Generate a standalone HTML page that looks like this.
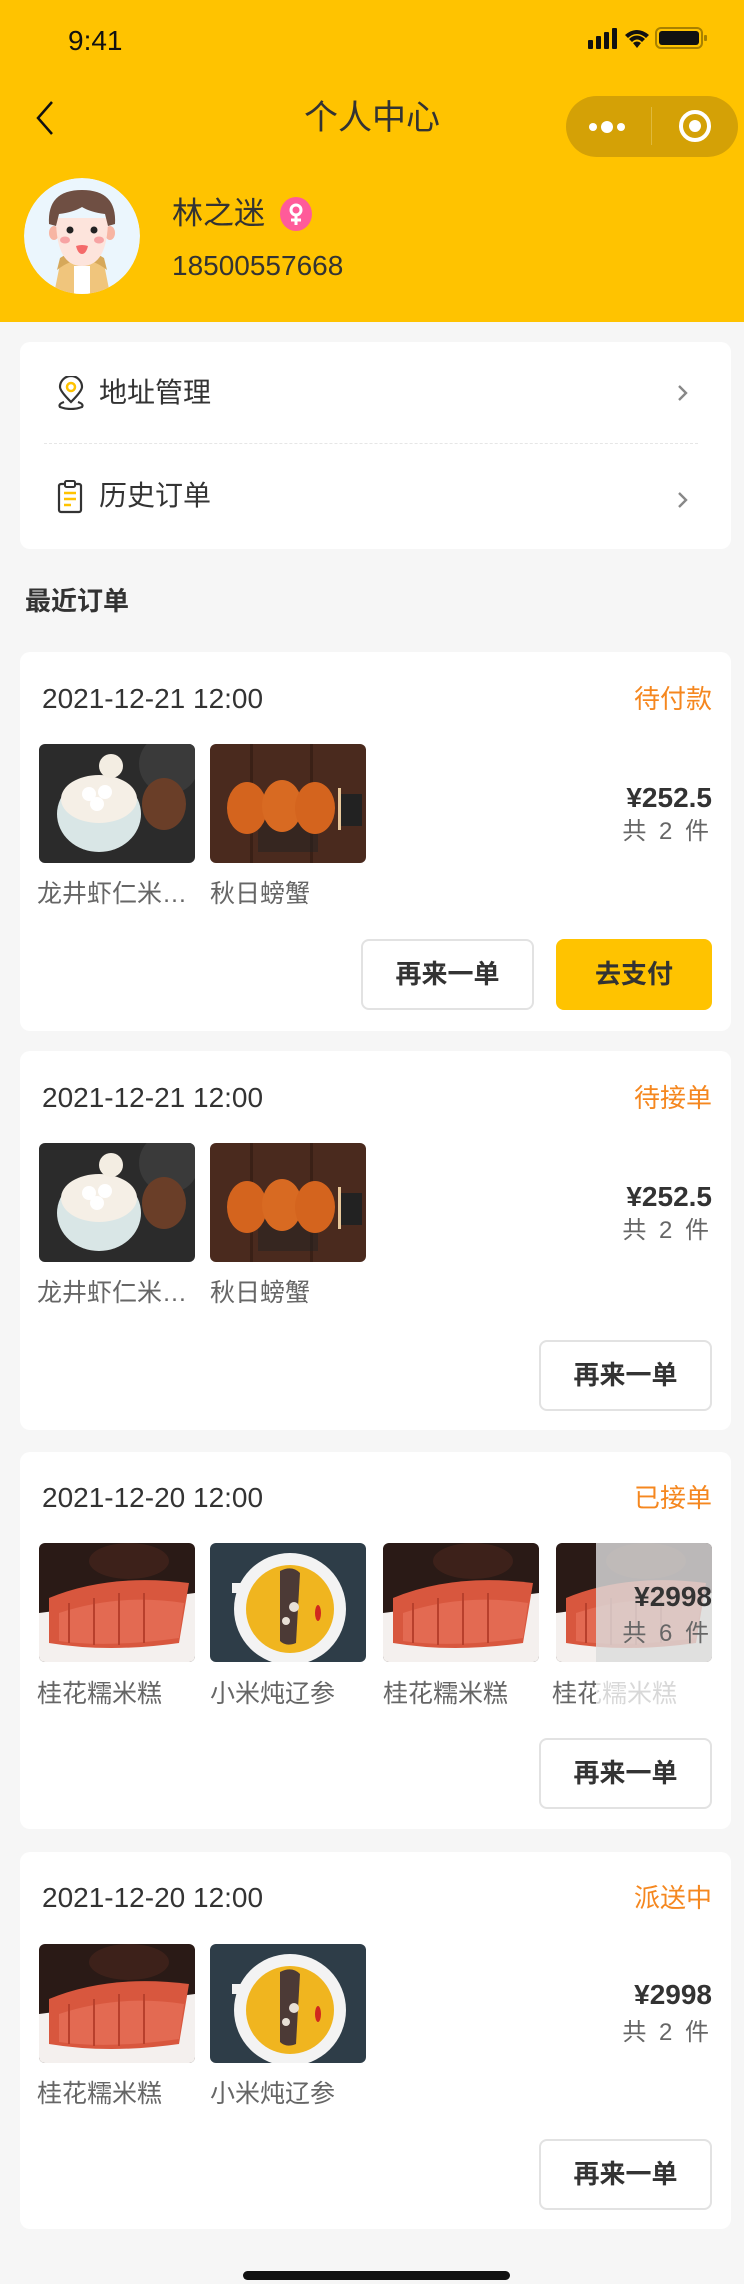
<!DOCTYPE html>
<html><head><meta charset="utf-8">
<style>
*{margin:0;padding:0;box-sizing:border-box}
body{width:744px;height:2284px;background:#f6f6f6;font-family:"Liberation Sans","Noto Sans CJK SC",sans-serif;position:relative;overflow:hidden;color:#333}
.abs{position:absolute}
.hdr{left:0;top:0;width:744px;height:322px;background:#ffc300}
.card{position:absolute;left:20px;width:711px;background:#fff;border-radius:10px}
.date{position:absolute;left:22px;font-size:28px;color:#333;line-height:30px}
.st{position:absolute;right:19px;font-size:26px;color:#f5871f;line-height:30px}
.img{position:absolute;width:156px;height:119px;border-radius:6px;overflow:hidden}
.nm{position:absolute;font-size:25px;color:#666;line-height:30px;white-space:nowrap}
.price{position:absolute;right:19px;font-size:28px;font-weight:bold;color:#333;line-height:32px}
.cnt{position:absolute;right:19px;font-size:24px;color:#666;line-height:28px;letter-spacing:3px}
.btn{position:absolute;height:71px;border:2px solid #e2e2e2;border-radius:8px;font-size:26px;font-weight:bold;color:#333;text-align:center;line-height:67px}
.btn.y{background:#ffc300;border-color:#ffc300}
</style></head><body>
<div class="abs hdr"></div>
<div class="abs" style="left:68px;top:24px;font-size:28px;color:#111;line-height:34px">9:41</div>
<svg class="abs" style="left:588px;top:26px" width="140" height="28" viewBox="0 0 140 28">
<rect x="0" y="14" width="5" height="9" rx="1" fill="#111"/><rect x="8" y="10" width="5" height="13" rx="1" fill="#111"/><rect x="16" y="6" width="5" height="17" rx="1" fill="#111"/><rect x="24" y="2" width="5" height="21" rx="1" fill="#111"/>
<path d="M37 9 Q49 -1 61 9 L58 12 Q49 4 40 12Z M41 13 Q49 6 57 13 L54 16 Q49 11 44 16Z M45 17 Q49 14 53 17 L49 22Z" fill="#111"/>
<rect x="68" y="2" width="46" height="20" rx="5" fill="none" stroke="#a88000" stroke-width="2"/><rect x="71" y="5" width="40" height="14" rx="3" fill="#111"/><rect x="116" y="9" width="3" height="6" rx="1" fill="#a88000"/>
</svg>
<svg class="abs" style="left:30px;top:100px" width="30" height="36"><path d="M22 2 L8 18 L22 34" fill="none" stroke="#111" stroke-width="2.5"/></svg>
<div class="abs" style="left:0;width:744px;top:97px;text-align:center;font-size:34px;color:#333;line-height:42px">个人中心</div>
<div class="abs" style="left:566px;top:96px;width:172px;height:61px;border-radius:31px;background:#d4a106"></div>
<div class="abs" style="left:651px;top:107px;width:1px;height:38px;background:#e0b93b"></div>
<svg class="abs" style="left:585px;top:112px" width="60" height="30"><circle cx="8" cy="15" r="4" fill="#fff"/><circle cx="22" cy="15" r="6" fill="#fff"/><circle cx="36" cy="15" r="4" fill="#fff"/></svg>
<svg class="abs" style="left:676px;top:106px" width="40" height="40"><circle cx="19" cy="20" r="14" fill="none" stroke="#fff" stroke-width="4"/><circle cx="19" cy="20" r="6" fill="#fff"/></svg>
<svg class="abs" style="left:24px;top:178px" width="116" height="116" viewBox="0 0 116 116">
<defs><clipPath id="av"><circle cx="58" cy="58" r="58"/></clipPath></defs>
<g clip-path="url(#av)">
<circle cx="58" cy="58" r="58" fill="#ebf6fd"/>
<path d="M30 116 L36 86 Q58 74 80 86 L86 116Z" fill="#f0c57c"/>
<path d="M33 92 Q58 72 83 92 L80 80 Q58 66 36 80Z" fill="#d6a85a"/>
<rect x="50" y="88" width="16" height="28" fill="#fff"/>
<ellipse cx="30" cy="55" rx="5" ry="7" fill="#f7b5a3"/><ellipse cx="86" cy="55" rx="5" ry="7" fill="#f7b5a3"/>
<path d="M32 40 Q32 88 58 88 Q84 88 84 40 Z" fill="#fde4dc"/>
<path d="M25 46 Q23 12 58 12 Q93 12 91 46 L84 48 Q82 40 81 36 Q66 34 58 29 Q50 34 35 36 Q34 40 32 48Z" fill="#6f4f43"/>
<circle cx="46" cy="52" r="3.5" fill="#222"/><circle cx="70" cy="52" r="3.5" fill="#222"/>
<ellipse cx="41" cy="62" rx="5" ry="3.5" fill="#f7a3a3"/><ellipse cx="75" cy="62" rx="5" ry="3.5" fill="#f7a3a3"/>
<path d="M52 68 Q58 66 64 68 Q62 76 58 76 Q54 76 52 68Z" fill="#f46a6a"/>
</g></svg>
<div class="abs" style="left:172px;top:195px;font-size:31px;color:#333;line-height:38px">林之迷</div>
<svg class="abs" style="left:280px;top:197px" width="33" height="34"><ellipse cx="16" cy="17" rx="16" ry="17" fill="#ff5b9a"/><circle cx="16" cy="13" r="5" fill="none" stroke="#fff" stroke-width="3"/><path d="M16 18 V28 M11 23 H21" stroke="#fff" stroke-width="3"/></svg>
<div class="abs" style="left:172px;top:249px;font-size:28px;color:#333;line-height:34px">18500557668</div>

<div class="card" style="top:342px;height:207px"></div>
<svg class="abs" style="left:56px;top:376px" width="30" height="34" viewBox="0 0 30 34"><path d="M15 26 Q4 15 4 11 A11 11 0 0 1 26 11 Q26 15 15 26Z" fill="none" stroke="#333" stroke-width="2.2"/><circle cx="15" cy="11" r="4" fill="none" stroke="#ffc300" stroke-width="2.5"/><path d="M8 26 Q2 28 4 31 Q15 35 26 31 Q28 28 22 26" fill="none" stroke="#333" stroke-width="2.2"/></svg>
<div class="abs" style="left:99px;top:376px;font-size:28px;color:#333;line-height:34px">地址管理</div>
<svg class="abs" style="left:676px;top:383px" width="14" height="20"><path d="M3 3 L10 10 L3 17" fill="none" stroke="#888" stroke-width="2.4"/></svg>
<div class="abs" style="left:44px;top:443px;width:654px;border-top:1px dashed #e6e6e6"></div>
<svg class="abs" style="left:56px;top:480px" width="30" height="34" viewBox="0 0 30 34"><rect x="3" y="4" width="22" height="28" rx="2" fill="none" stroke="#333" stroke-width="2.2"/><rect x="9" y="1" width="10" height="6" rx="1.5" fill="#fff" stroke="#333" stroke-width="2"/><path d="M8 13 H20 M8 19 H20 M8 25 H15" stroke="#ffc300" stroke-width="2.5"/></svg>
<div class="abs" style="left:99px;top:479px;font-size:28px;color:#333;line-height:34px">历史订单</div>
<svg class="abs" style="left:676px;top:490px" width="14" height="20"><path d="M3 3 L10 10 L3 17" fill="none" stroke="#888" stroke-width="2.4"/></svg>

<div class="abs" style="left:25px;top:585px;font-size:26px;font-weight:bold;color:#333;line-height:32px">最近订单</div>

<svg width="0" height="0" style="position:absolute">
<defs>
<symbol id="shrimp" viewBox="0 0 156 119"><rect width="156" height="119" fill="#2b2b2b"/><circle cx="130" cy="20" r="30" fill="#3a3a3a"/><ellipse cx="125" cy="60" rx="22" ry="26" fill="#6a3e28"/><ellipse cx="60" cy="70" rx="42" ry="38" fill="#d9e6e6"/><ellipse cx="60" cy="55" rx="38" ry="24" fill="#f5efe6"/><circle cx="50" cy="50" r="7" fill="#fff"/><circle cx="66" cy="48" r="7" fill="#fff"/><circle cx="58" cy="60" r="7" fill="#fff"/><circle cx="72" cy="22" r="12" fill="#f3ede2"/></symbol>
<symbol id="crab" viewBox="0 0 156 119"><rect width="156" height="119" fill="#4a2a1e"/><rect x="40" y="0" width="3" height="119" fill="#3a2016"/><rect x="100" y="0" width="3" height="119" fill="#3a2016"/><rect x="48" y="68" width="60" height="40" fill="#222" opacity=".5"/><ellipse cx="37" cy="64" rx="20" ry="26" fill="#d4641e"/><ellipse cx="72" cy="62" rx="20" ry="26" fill="#d86a22"/><ellipse cx="105" cy="64" rx="20" ry="26" fill="#d4641e"/><rect x="130" y="50" width="22" height="32" fill="#222"/><rect x="128" y="44" width="3" height="42" fill="#e8c89a"/></symbol>
<symbol id="cake" viewBox="0 0 156 119"><rect width="156" height="119" fill="#2a1a16"/><ellipse cx="90" cy="18" rx="40" ry="18" fill="#3d211a"/><path d="M0 70 L156 50 L156 119 L0 119Z" fill="#f4f0ee"/><path d="M10 55 Q70 30 150 40 L140 100 Q70 110 10 100Z" fill="#d8573e"/><path d="M20 70 Q80 50 145 60 L140 95 Q70 105 20 98Z" fill="#e36a52"/><path d="M30 60 V100 M55 55 V102 M80 50 V102 M105 50 V100" stroke="#b8402c" stroke-width="2"/></symbol>
<symbol id="millet" viewBox="0 0 156 119"><rect width="156" height="119" fill="#2e3d48"/><circle cx="80" cy="66" r="56" fill="#f3f3f3"/><circle cx="80" cy="66" r="44" fill="#f0b51f"/><path d="M70 28 Q82 22 90 30 L86 100 Q76 104 70 98Z" fill="#4c3a36"/><circle cx="84" cy="64" r="5" fill="#e8e0d6"/><circle cx="76" cy="78" r="4" fill="#e8e0d6"/><ellipse cx="108" cy="70" rx="3" ry="8" fill="#d0281e"/><rect x="22" y="40" width="14" height="10" fill="#f3f3f3"/></symbol>
</defs></svg>

<div class="card" style="top:652px;height:379px">
<div class="date" style="top:32px">2021-12-21 12:00</div><div class="st" style="top:32px">待付款</div>
<svg class="img" style="left:19px;top:92px"><use href="#shrimp"/></svg>
<svg class="img" style="left:190px;top:92px"><use href="#crab"/></svg>
<div class="nm" style="left:17px;top:227px">龙井虾仁米…</div><div class="nm" style="left:190px;top:227px">秋日螃蟹</div>
<div class="price" style="top:130px">¥252.5</div><div class="cnt" style="top:166px">共 2 件</div>
<div class="btn" style="left:341px;top:287px;width:173px">再来一单</div>
<div class="btn y" style="left:536px;top:287px;width:156px">去支付</div>
</div>
<div class="card" style="top:1051px;height:379px">
<div class="date" style="top:32px">2021-12-21 12:00</div><div class="st" style="top:32px">待接单</div>
<svg class="img" style="left:19px;top:92px"><use href="#shrimp"/></svg>
<svg class="img" style="left:190px;top:92px"><use href="#crab"/></svg>
<div class="nm" style="left:17px;top:227px">龙井虾仁米…</div><div class="nm" style="left:190px;top:227px">秋日螃蟹</div>
<div class="price" style="top:130px">¥252.5</div><div class="cnt" style="top:166px">共 2 件</div>
<div class="btn" style="left:519px;top:289px;width:173px">再来一单</div>
</div>
<div class="card" style="top:1452px;height:377px">
<div class="date" style="top:31px">2021-12-20 12:00</div><div class="st" style="top:31px">已接单</div>
<svg class="img" style="left:19px;top:91px"><use href="#cake"/></svg>
<svg class="img" style="left:190px;top:91px"><use href="#millet"/></svg>
<svg class="img" style="left:363px;top:91px"><use href="#cake"/></svg>
<svg class="img" style="left:536px;top:91px"><use href="#cake"/></svg>
<div class="nm" style="left:17px;top:227px">桂花糯米糕</div><div class="nm" style="left:190px;top:227px">小米炖辽参</div>
<div class="nm" style="left:363px;top:227px">桂花糯米糕</div><div class="nm" style="left:532px;top:227px">桂花糯米糕</div>
<div class="abs" style="left:576px;top:91px;width:116px;height:119px;background:rgba(220,220,220,0.82);border-radius:0 6px 6px 0"></div>
<div class="abs" style="left:576px;top:220px;width:135px;height:45px;background:rgba(255,255,255,0.75)"></div>
<div class="price" style="top:129px">¥2998</div><div class="cnt" style="top:168px">共 6 件</div>
<div class="btn" style="left:519px;top:286px;width:173px">再来一单</div>
</div>
<div class="card" style="top:1852px;height:377px">
<div class="date" style="top:31px">2021-12-20 12:00</div><div class="st" style="top:31px">派送中</div>
<svg class="img" style="left:19px;top:92px"><use href="#cake"/></svg>
<svg class="img" style="left:190px;top:92px"><use href="#millet"/></svg>
<div class="nm" style="left:17px;top:227px">桂花糯米糕</div><div class="nm" style="left:190px;top:227px">小米炖辽参</div>
<div class="price" style="top:127px">¥2998</div><div class="cnt" style="top:167px">共 2 件</div>
<div class="btn" style="left:519px;top:287px;width:173px">再来一单</div>
</div>
<div class="abs" style="left:243px;top:2271px;width:267px;height:9px;border-radius:5px;background:#111"></div>
</body></html>
